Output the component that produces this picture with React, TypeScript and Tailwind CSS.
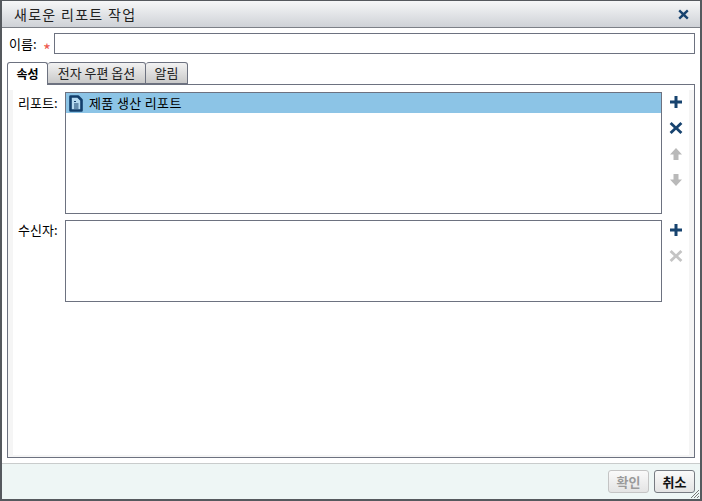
const font = { fontFamily: '"Noto Sans CJK KR", "Liberation Sans", sans-serif' };

function PlusIcon({ color }: { color: string }) {
  return (
    <svg width="14" height="14" viewBox="0 0 14 14" className="block">
      <path d="M5.5 1h3v4.5H13v3H8.5V13h-3V8.5H1v-3h4.5z" fill={color} />
    </svg>
  );
}

function CrossIcon({ color }: { color: string }) {
  return (
    <svg width="14" height="14" viewBox="0 0 14 14" className="block">
      <path d="M2.6 1 7 5.2 11.4 1 13.4 3 9.1 7l4.3 4-2 2L7 8.8 2.6 13 .6 11l4.3-4L.6 3z" fill={color} />
    </svg>
  );
}

function ArrowIcon({ down }: { down?: boolean }) {
  return (
    <svg width="12" height="12" viewBox="0 0 12 12" className={down ? "block rotate-180" : "block"}>
      <path d="M6 0 12 6.5H8.5V12h-5V6.5H0z" fill="#b9b9b9" />
    </svg>
  );
}

function ReportIcon() {
  return (
    <svg width="16" height="17" viewBox="0 0 16 17" className="block shrink-0">
      <path d="M2.5 1.5h7.5l3.5 3.5v10.5h-11z" fill="#b5d9f0" stroke="#123e6b" strokeWidth="2.6" strokeLinejoin="round" />
      <path d="M6 9h4.5M6 11h4.5M6 13h4.5M6 6.5h2" stroke="#123e6b" strokeWidth="1" fill="none" />
    </svg>
  );
}

const tabs = [
  { label: "속성", active: true, width: "w-[41px]" },
  { label: "전자 우편 옵션", active: false, width: "w-[98px]" },
  { label: "알림", active: false, width: "w-[42px]" },
];

export default function App() {
  return (
    <div style={font} className="w-[702px] h-[501px] flex flex-col bg-white border-l-2 border-r-2 border-b-2 border-t border-[#55595e] text-[13px] text-black overflow-hidden">
      {/* Title bar */}
      <div className="h-[27px] shrink-0 flex items-center justify-between pl-[12px] pr-[11px] border-b border-[#7c8087] bg-gradient-to-b from-[#f6f7f8] to-[#cfd2d7]">
        <span className="text-[14px] tracking-[1.3px] text-[#222]">새로운 리포트 작업</span>
        <svg width="11" height="11" viewBox="0 0 11 11">
          <path d="M2 0.5 5.5 3.7 9 .5l1.6 1.7L7.3 5.5l3.3 3.3L9 10.5 5.5 7.3 2 10.5.4 8.8l3.3-3.3L.4 2.2z" fill="#17436f" />
        </svg>
      </div>

      {/* Name row */}
      <div className="flex items-center h-[21px] mt-[5px] shrink-0 pl-[7px] pr-[5px]">
        <span className="w-[34px]">이름:</span>
        <span className="w-[11px] h-[21px] pt-[8px] text-[#ee5a50] text-[17px] leading-none">*</span>
        <input className="flex-1 h-[21px] bg-white border border-[#6d7280] outline-none" />
      </div>

      {/* Tabs */}
      <div className="flex h-[23px] mt-[8px] shrink-0 pl-[5px] relative z-10">
        {tabs.map((tab) =>
          tab.active ? (
            <div key={tab.label} className={`${tab.width} h-[23px] flex items-center justify-center text-[12px] font-bold bg-white border border-b-0 border-[#6d7280] rounded-t-[3px]`}>
              {tab.label}
            </div>
          ) : (
            <div key={tab.label} className={`${tab.width} h-[22px] flex items-center justify-center bg-gradient-to-b from-[#f2f2f2] to-[#c9c9c9] border border-l-0 border-[#6d7280] rounded-t-[3px] text-[#222]`}>
              {tab.label}
            </div>
          )
        )}
      </div>

      {/* Panel */}
      <div className="h-[374px] mx-[5px] -mt-[1px] shrink-0 border border-[#6d7280] bg-white pt-[5px]">
        <div className="h-full bg-[#f5f5f5] px-[5px] pb-[2px]">
          <div className="h-full bg-white flex flex-col gap-[6px] pt-[2px]">
            <div className="flex h-[122px]">
              <div className="w-[52px] pl-[5px] pt-[1px]">리포트:</div>
              <div className="w-[597px] border border-[#6d7280] bg-white">
                <div className="h-[20px] bg-[#8cc4e6] flex items-center pl-[2px] gap-[5px]">
                  <ReportIcon />
                  <span className="tracking-[0.35px]">제품 생산 리포트</span>
                </div>
              </div>
              <div className="flex flex-col items-center w-[27px] pl-[1px] pt-[3px] gap-[12px]">
                <PlusIcon color="#17436f" />
                <CrossIcon color="#17436f" />
                <div className="flex flex-col gap-[14px] pt-[1px]">
                  <ArrowIcon />
                  <ArrowIcon down />
                </div>
              </div>
            </div>
            <div className="flex h-[82px]">
              <div className="w-[52px] pl-[5px]">수신자:</div>
              <div className="w-[597px] border border-[#6d7280] bg-white" />
              <div className="flex flex-col items-center w-[27px] pl-[1px] pt-[3px] gap-[12px]">
                <PlusIcon color="#17436f" />
                <CrossIcon color="#c4c4c4" />
              </div>
            </div>
          </div>
        </div>
      </div>

      {/* Footer */}
      <div className="mt-[5px] flex-1 relative flex items-center justify-end gap-[5px] pr-[5px] border-t border-[#c9cccc] bg-[#eef6f5]">
        <button className="w-[41px] h-[23px] rounded-[3px] border border-[#c4c4c4] bg-gradient-to-b from-[#fafafa] to-[#e4e4e4] font-bold text-[#9a9a9a]">확인</button>
        <button className="w-[41px] h-[23px] rounded-[3px] border border-[#777b82] bg-gradient-to-b from-[#fafafa] to-[#e4e4e4] font-bold text-[#111]">취소</button>
        <svg width="10" height="10" viewBox="0 0 10 10" className="absolute right-0 bottom-0">
          <path d="M9 1 1 9M9 4 4 9M9 7 7 9" stroke="#777" strokeWidth="1" fill="none" />
        </svg>
      </div>
    </div>
  );
}
